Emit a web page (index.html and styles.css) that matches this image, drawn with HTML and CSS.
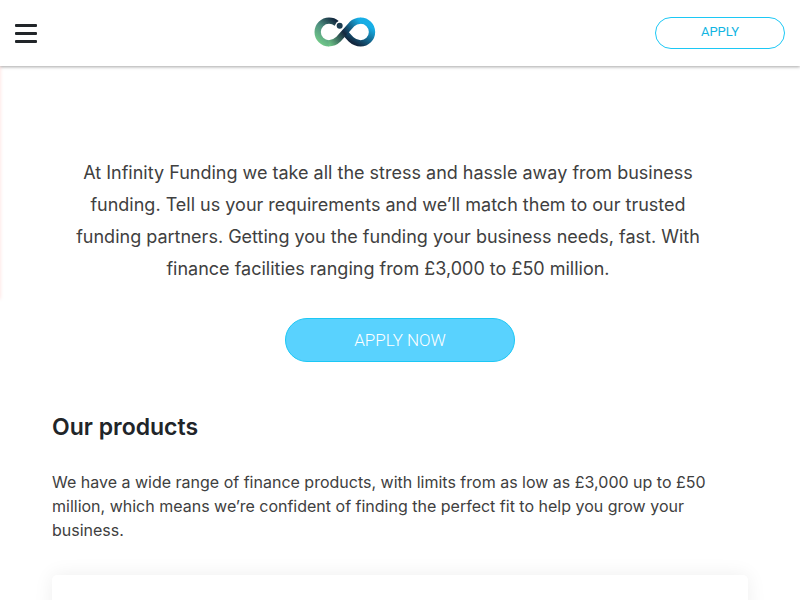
FILE: index.html
```
<!DOCTYPE html>
<html lang="en">
<head>
  <meta charset="UTF-8">
  <meta name="viewport" content="width=device-width, initial-scale=1.0">
  <title>Infinity Funding</title>
  <link rel="stylesheet" href="styles.css">
</head>
<body>
  <nav class="side-menu" aria-label="Main menu"></nav>

  <header class="header">
    <button type="button" class="menu-btn" aria-label="Open menu">
      <svg width="22" height="19" viewBox="0 0 22 19" aria-hidden="true">
        <rect y="0" width="22" height="3" rx="1"/>
        <rect y="8" width="22" height="3" rx="1"/>
        <rect y="16" width="22" height="3" rx="1"/>
      </svg>
    </button>
    <a href="#" class="logo" aria-label="Infinity Funding">
      <svg width="64" height="32" viewBox="0 0 192 96" fill="none" stroke-width="19" aria-hidden="true">
        <defs>
          <linearGradient id="green" gradientUnits="userSpaceOnUse" x1="20" y1="80" x2="72" y2="16">
            <stop offset="0" stop-color="#70c888"/>
            <stop offset="0.5" stop-color="#4f9080"/>
            <stop offset="1" stop-color="#12283f"/>
          </linearGradient>
          <linearGradient id="band" gradientUnits="userSpaceOnUse" x1="44" y1="84" x2="136" y2="10">
            <stop offset="0" stop-color="#70c888"/>
            <stop offset="0.5" stop-color="#14283f"/>
            <stop offset="1" stop-color="#17aee6"/>
          </linearGradient>
          <linearGradient id="blue" gradientUnits="userSpaceOnUse" x1="120" y1="80" x2="156" y2="22">
            <stop offset="0" stop-color="#12263d"/>
            <stop offset="1" stop-color="#17aee6"/>
          </linearGradient>
        </defs>
        <path stroke="url(#blue)" d="M88 42 L112 68 C122 77 130 79 140 79 A34 34 0 0 0 140 11"/>
        <path stroke="url(#green)" d="M68 19 C61 13 54 11 45 11 A34 34 0 0 0 45 79"/>
        <path stroke="url(#band)" d="M44 79 C56 79 64 76 73 67 L113 22 C122 13 130 11 141 11"/>
        <circle cx="77" cy="26" r="13" fill="#fff"/>
        <circle cx="77" cy="26" r="9" fill="#1c3c50"/>
      </svg>
    </a>
    <a href="#" class="btn-apply">APPLY</a>
  </header>

  <main class="container">
    <section class="intro">
      <p class="intro-text">At Infinity Funding we take all the stress and hassle away from business funding. Tell us your requirements and we’ll match them to our trusted funding partners. Getting you the funding your business needs, fast. With finance facilities ranging from £3,000 to £50 million.</p>
      <a href="#" class="btn-now">APPLY NOW</a>
    </section>

    <section class="products">
      <h2>Our products</h2>
      <p>We have a wide range of finance products, with limits from as low as £3,000 up to £50 million, which means we’re confident of finding the perfect fit to help you grow your business.</p>
      <div class="card"></div>
    </section>
  </main>
</body>
</html>
```
FILE: styles.css
```
* {box-sizing:border-box; margin:0; padding:0}
body {font-family:Inter, sans-serif; font-size:16px; line-height:24px; color:#404040; background:#fff;}
a {text-decoration:none}

.header {position:relative; display:flex; justify-content:space-between; align-items:center; height:66px; padding:0 15px; background:#fff; box-shadow:0 1px 3px rgba(0,0,0,.35);}
.menu-btn {display:flex; border:0; background:none; fill:#212529; cursor:pointer;}
.logo {display:flex;}
.btn-apply {width:130px; height:32px; border:1px solid #1cc8f5; border-radius:16px; font-family:Roboto, sans-serif; font-size:13px; line-height:28px; text-align:center; color:#12b5e2;}

/* closed menu, only its shadow reaches the page */
.side-menu {position:absolute; top:60px; left:-250px; width:250px; height:239px; box-shadow:0 0 4px #ffdcda;}

.container {padding:0 52px;}
.intro {display:flex; flex-direction:column; align-items:center; padding-top:91px;}
.intro-text {padding:0 36px 0 12px; font-size:18px; line-height:32px; text-align:center;}
.btn-now {width:230px; height:44px; margin-top:33px; border:1px solid #1cc8f5; border-radius:22px; background:#59d2fe; font-family:Roboto, sans-serif; font-size:17px; font-weight:300; line-height:42px; text-align:center; color:#fff;}

.products h2 {margin-top:48px; font-size:23px; line-height:34px; font-weight:600; color:#212529;}
.products p {margin-top:26px;}
.card {min-height:24px; padding:24px; margin-top:33px; border-radius:5px; background:#fff; box-shadow:0 0 20px rgba(0,30,20,.07);}

/* scrollable without a visible bar */
html {scrollbar-width:none;}
```
